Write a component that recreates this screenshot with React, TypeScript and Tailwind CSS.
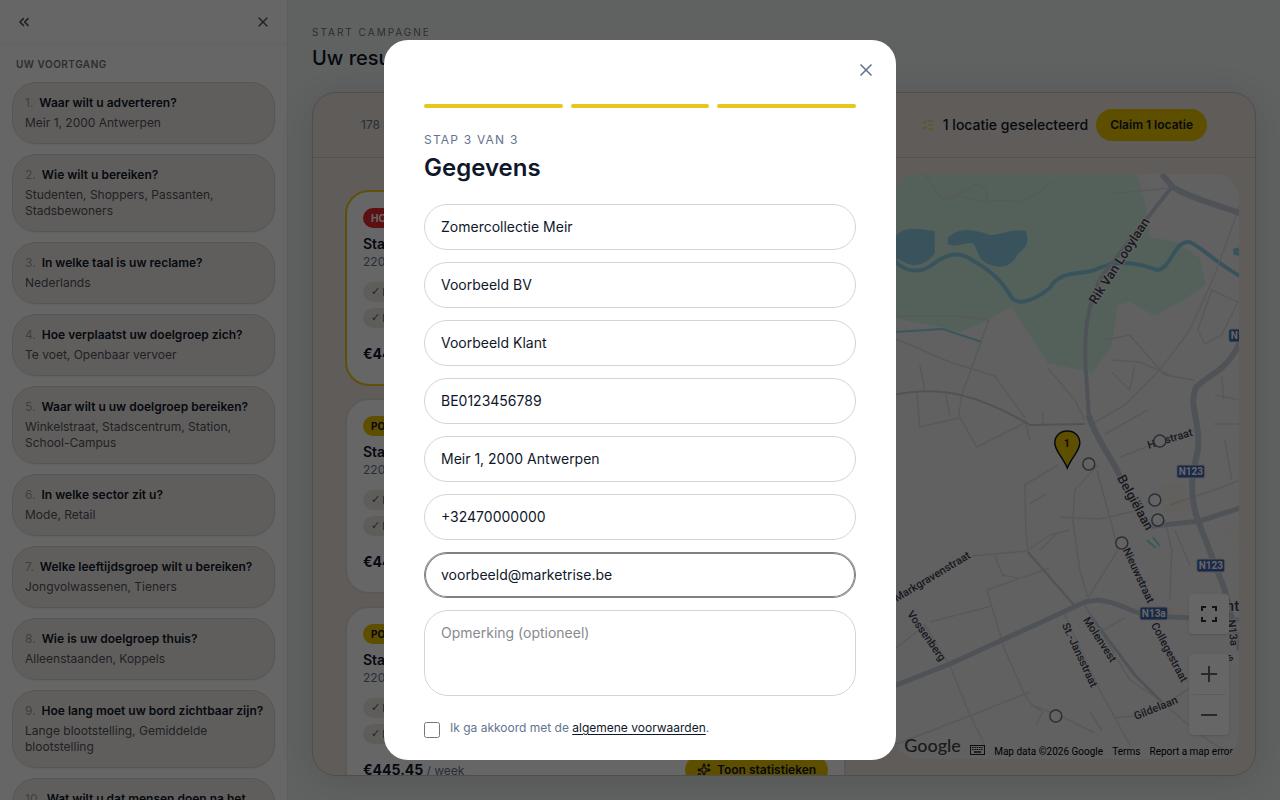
import { ChevronsLeft, ListChecks, Sparkles, X } from 'lucide-react';

const answers = [
  { question: 'Waar wilt u adverteren?', answer: 'Meir 1, 2000 Antwerpen' },
  { question: 'Wie wilt u bereiken?', answer: 'Studenten, Shoppers, Passanten, Stadsbewoners' },
  { question: 'In welke taal is uw reclame?', answer: 'Nederlands' },
  { question: 'Hoe verplaatst uw doelgroep zich?', answer: 'Te voet, Openbaar vervoer' },
  { question: 'Waar wilt u uw doelgroep bereiken?', answer: 'Winkelstraat, Stadscentrum, Station, School-Campus' },
  { question: 'In welke sector zit u?', answer: 'Mode, Retail' },
  { question: 'Welke leeftijdsgroep wilt u bereiken?', answer: 'Jongvolwassenen, Tieners' },
  { question: 'Wie is uw doelgroep thuis?', answer: 'Alleenstaanden, Koppels' },
  { question: 'Hoe lang moet uw bord zichtbaar zijn?', answer: 'Lange blootstelling, Gemiddelde blootstelling' },
  { question: 'Wat wilt u dat mensen doen na het zien?', answer: 'Winkel bezoeken' },
];

const locations = [
  { id: 1, badge: 'HOT', hot: true, selected: true },
  { id: 2, badge: 'POPULAIR', hot: false, selected: false },
  { id: 3, badge: 'POPULAIR', hot: false, selected: false },
];

const fields = [
  { name: 'campaign', label: 'Campagnenaam', type: 'text', value: 'Zomercollectie Meir' },
  { name: 'company', label: 'Bedrijfsnaam', type: 'text', value: 'Voorbeeld BV' },
  { name: 'contact', label: 'Contactpersoon', type: 'text', value: 'Voorbeeld Klant' },
  { name: 'vat', label: 'BTW-nummer', type: 'text', value: 'BE0123456789' },
  { name: 'address', label: 'Adres', type: 'text', value: 'Meir 1, 2000 Antwerpen' },
  { name: 'phone', label: 'Telefoon', type: 'tel', value: '+32470000000' },
  { name: 'email', label: 'E-mail', type: 'email', value: 'voorbeeld@marketrise.be' },
];

const minorRoads = [
  'M925 174 L935 190 L942 200 L960 196 L985 202 L1000 200 L1020 202 L1040 192 L1055 180',
  'M950 198 L978 184 L987 190 L987 200',
  'M1110 194 L1150 190 L1168 188',
  'M1240 205 L1215 275 L1190 330 L1160 370 L1125 405 L1092 424',
  'M894 338 L950 362 L995 376 L1025 418',
  'M894 316 L960 316 L989 320 L962 395 L959 415 L977 447 L1025 423',
  'M917 392 L920 427 L959 418',
  'M1048 368 L1075 400 L1085 420',
  'M1105 340 L1130 335 L1165 375 L1195 380',
  'M1105 434 L1148 410',
  'M1112 360 L1140 362 L1170 375',
  'M1112 372 L1130 390 L1135 365',
  'M1212 290 L1238 302 L1222 335 L1205 344 L1198 330 Z',
  'M1120 457 L1165 440 L1195 430',
  'M1025 420 L1030 440',
  'M1058 465 L1025 485 L1026 530 L1028 550',
  'M1098 465 L1075 490 L1073 520 L1080 570 L1088 598',
  'M1097 470 L1112 525 L1118 550 L1088 598',
  'M1060 517 L1100 519 L1140 510',
  'M1028 550 L1050 535 L1070 530',
  'M972 556 L1028 551',
  'M995 556 L1003 575 L1018 578',
  'M987 590 L1050 568 M987 590 L1005 650 L1025 695 L1032 705 L1065 718 L1095 733',
  'M930 622 L992 606',
  'M894 650 L925 625 L950 665 L970 715 L985 745',
  'M894 745 L970 716 L1030 692',
  'M1085 605 L1130 680 L1160 700 L1200 735 L1240 760',
  'M1065 615 L1100 690 L1130 745',
  'M1115 718 L1150 714 L1190 688 L1215 675',
  'M1095 635 L1125 618',
  'M1032 705 L1043 712 L1036 726 M1090 712 L1102 730',
  'M1165 520 L1172 550 L1170 600',
  'M1170 505 L1220 488 L1240 480',
  'M1215 395 L1240 400 M1214 424 L1240 424 M1222 376 L1224 400',
  'M1225 440 L1232 480 M1175 530 L1190 565',
  'M920 365 L925 390 M946 395 L950 415 M1043 412 L1043 425',
  'M1040 550 L1058 533 M1030 504 L1046 494',
];

const mapLabels = [
  { text: 'Rik Van Looylaan', x: 1096, y: 305, angle: -57, size: 13 },
  { text: 'Belgiëlaan', x: 1117, y: 478, angle: 61, size: 13 },
  { text: 'Hofstraat', x: 1149, y: 449, angle: -17, size: 11 },
  { text: 'Nieuwstraat', x: 1123, y: 550, angle: 65, size: 11 },
  { text: 'Markgravenstraat', x: 897, y: 602, angle: -31, size: 11 },
  { text: 'Vossenberg', x: 907, y: 614, angle: 55, size: 11 },
  { text: 'St.-Jansstraat', x: 1062, y: 625, angle: 65, size: 11 },
  { text: 'Molenvest', x: 1083, y: 620, angle: 57, size: 11 },
  { text: 'Collegestraat', x: 1151, y: 625, angle: 62, size: 11 },
  { text: 'Gildelaan', x: 1136, y: 720, angle: -22, size: 11 },
  { text: 'N13a', x: 1228, y: 620, angle: 84, size: 11 },
  { text: 's', x: 1230, y: 662, angle: -40, size: 11 },
];

const roadShields = [
  { text: 'N123', x: 1191, y: 472 },
  { text: 'N123', x: 1211, y: 566 },
  { text: 'N13a', x: 1154, y: 614 },
  { text: 'N123', x: 1243, y: 336 },
];

const places = [
  [1160, 441],
  [1089, 464],
  [1155, 500],
  [1158, 520],
  [1122, 543],
  [1056, 716],
];

function Sidebar() {
  return (
    <aside className="flex w-72 shrink-0 flex-col border-r border-slate-200 bg-white">
      <div className="flex h-11 shrink-0 items-center justify-between border-b border-slate-100 px-4">
        <button aria-label="Inklappen" className="text-zinc-600">
          <ChevronsLeft size={16} strokeWidth={2.5} />
        </button>
        <button aria-label="Sluiten" className="text-zinc-600">
          <X size={16} />
        </button>
      </div>
      <div className="flex-1 overflow-hidden px-3 pt-3">
        <h2 className="mb-2.5 px-1 text-[10px] leading-4 font-semibold tracking-wider text-zinc-500 uppercase">
          Uw voortgang
        </h2>
        <ol className="space-y-2.5">
          {answers.map((item, i) => (
            <li key={item.question} className="rounded-3xl border border-[#d9d6cf] bg-[#efebe5] py-3 pr-1.5 pl-3 text-xs leading-4 shadow-xs">
              <p className="font-semibold text-slate-900">
                <span className="mr-1.5 font-normal text-zinc-400">{i + 1}.</span>
                {item.question}
              </p>
              <p className="mt-1 pr-1.5 text-zinc-600">{item.answer}</p>
            </li>
          ))}
        </ol>
      </div>
    </aside>
  );
}

function Chip({ text }: { text: string }) {
  return (
    <span className="flex h-5 items-center gap-0.5 rounded-full bg-[#ebe8e0] px-2">
      <span className="font-['DejaVu_Sans',sans-serif]">✓</span>
      {text}
    </span>
  );
}

function LocationCard({ badge, hot, selected }: { badge: string; hot: boolean; selected: boolean }) {
  return (
    <article className={`rounded-3xl border-2 bg-white p-4 ${selected ? 'border-[#eac51d]' : 'border-[#e4dfd6]'}`}>
      <span
        className={`flex h-5 w-fit items-center rounded-full px-2 text-[10px] font-bold ${
          hot ? 'bg-[#e62a2e] text-white' : 'bg-[#eac400] text-slate-900'
        }`}
      >
        {badge}
      </span>
      <h3 className="mt-1.5 text-sm leading-5 font-semibold text-slate-900">Stationsstraat</h3>
      <p className="text-xs leading-4 text-slate-500">2200 Herentals</p>
      <div className="mt-3 flex flex-col items-start gap-1.5 text-[11px] text-slate-600">
        <Chip text="In het centrum" />
        <Chip text="Doelgroep aanwezig" />
      </div>
      <div className="mt-3 flex h-7 items-center justify-between">
        <p className="text-sm font-bold text-slate-900">
          €445.45 <span className="text-xs font-normal text-slate-500">/ week</span>
        </p>
        <button className="flex h-7 items-center gap-1.5 rounded-full bg-[#eac400] px-3 text-xs font-semibold text-slate-900">
          <Sparkles size={14} />
          Toon statistieken
        </button>
      </div>
    </article>
  );
}

function MapDrawing() {
  return (
    <svg viewBox="894 174 345 585" preserveAspectRatio="xMaxYMin slice" className="h-full w-full" fontFamily="Roboto, sans-serif">
      <rect x="894" y="174" width="346" height="586" fill="#f3f2f3" />
      <path
        d="M894 174 H1137 L1146 205 L1150 237 L1178 242 L1200 258 L1206 285 L1180 302 L1155 316 L1130 302 L1118 305 L1112 345 L1093 373 L1048 363 L1025 328 L1011 307 L980 324 L960 332 L930 325 L894 318 Z"
        fill="#d3f3e0"
      />
      <path d="M1160 485 L1185 482 L1190 512 L1165 514 Z M1135 605 L1200 610 L1198 622 L1140 618 Z M1225 530 H1240 V560 Z" fill="#f6f0e6" />
      <g fill="#90d0e8">
        <path d="M894 238 C902 226 915 228 935 231 V253 C928 264 915 268 906 263 C900 260 894 258 894 258 Z" />
        <path d="M948 238 C960 226 975 230 990 235 C1005 234 1012 228 1026 231 C1030 243 1026 248 1018 254 C1012 266 1002 270 988 264 C976 258 978 246 972 243 C962 243 955 248 948 244 Z" />
        <path d="M1233 249 L1240 247 V256 L1234 255 Z" />
      </g>
      <path
        d="M894 260 C905 272 920 274 932 265 C945 255 958 250 972 260 C990 270 1002 280 1012 298 C1020 306 1035 300 1050 288 C1060 270 1080 275 1095 270 C1120 258 1140 264 1158 270 C1172 268 1174 240 1190 242 C1203 248 1215 262 1240 276"
        fill="none"
        stroke="#90d0e8"
        strokeWidth="4"
      />
      <path d="M894 332 L943 329 L982 342 M1147 540 L1156 548 M1153 537 L1160 546" fill="none" stroke="#90dae8" strokeWidth="2" />
      <g fill="none" stroke="#dadde3" strokeWidth="1.5">
        {minorRoads.map((d) => (
          <path key={d} d={d} />
        ))}
      </g>
      <g fill="none" stroke="#c6ced8" strokeLinejoin="round">
        <path d="M894 395 C940 385 980 395 1030 425 L1085 424" strokeWidth="2" />
        <path d="M1172 187 L1138 230 L1102 276 C1086 305 1084 340 1086 370 L1089 415" strokeWidth="4" />
        <path d="M1089 415 C1094 435 1110 455 1118 472 L1145 525" strokeWidth="6" />
        <path d="M1162 174 L1173 187 C1190 198 1215 204 1240 213" strokeWidth="6" />
        <path d="M1240 342 C1228 372 1205 376 1196 388 C1188 405 1202 425 1198 450 C1193 475 1188 490 1198 520 L1225 590 L1240 650" strokeWidth="6" />
        <path d="M1145 527 L1200 521 L1240 508" strokeWidth="5" />
        <path d="M894 686 L950 664 L1068 610 L1085 602 L1098 600 C1120 602 1130 612 1150 616 L1240 620" strokeWidth="5" />
        <path d="M1028 552 L1075 606" strokeWidth="2" />
        <path d="M1090 615 L1135 675 L1165 705" strokeWidth="3" />
      </g>
      <g fill="#3c4250" fontWeight="500" stroke="#f3f2f3" strokeWidth="2" paintOrder="stroke">
        {mapLabels.map((l) => (
          <text key={l.text} x={l.x} y={l.y} fontSize={l.size} transform={`rotate(${l.angle} ${l.x} ${l.y})`}>
            {l.text}
          </text>
        ))}
        <text x="1226" y="611" fontSize="15">
          nt
        </text>
      </g>
      {roadShields.map((s) => (
        <g key={`${s.x}-${s.y}`}>
          <rect x={s.x - 14} y={s.y - 7} width="28" height="13" rx="2" fill="#3f68b4" stroke="#ddd" />
          <text x={s.x} y={s.y + 3} fontSize="10" fontWeight="700" fill="#fff" textAnchor="middle">
            {s.text}
          </text>
        </g>
      ))}
      {places.map(([x, y]) => (
        <circle key={`${x}-${y}`} cx={x} cy={y} r="6" fill="#f8f8f8" stroke="#6b7280" strokeWidth="1.5" />
      ))}
      <path
        d="M1067.500 468 C1063 457 1055 451 1055 443 C1055 435.500 1060.500 431 1067.500 431 C1074.500 431 1080 435.500 1080 443 C1080 451 1072 457 1067.500 468 Z"
        fill="#eac400"
        stroke="#111827"
        strokeWidth="1.5"
      />
      <text x="1067" y="447" fontSize="10" fontWeight="700" fill="#111827" textAnchor="middle">
        1
      </text>
    </svg>
  );
}

function MapPanel() {
  return (
    <div className="relative h-full overflow-hidden rounded-3xl">
      <div className="h-full">
        <MapDrawing />
      </div>
      <button aria-label="Volledig scherm" className="absolute right-2.5 bottom-[125px] flex size-10 items-center justify-center rounded bg-white text-[#333] shadow">
        <svg width="16" height="16" viewBox="0 0 16 16" fill="none" stroke="currentColor" strokeWidth="2">
          <path d="M1 5V1h4M11 1h4v4M15 11v4h-4M5 15H1v-4" />
        </svg>
      </button>
      <div className="absolute right-2.5 bottom-6 flex w-10 flex-col rounded bg-white text-[#666] shadow">
        <button aria-label="Inzoomen" className="flex h-10 items-center justify-center">
          <svg width="16" height="16" viewBox="0 0 16 16" stroke="currentColor" strokeWidth="2">
            <path d="M0 8h16M8 0v16" />
          </svg>
        </button>
        <div className="mx-1 h-px bg-gray-200" />
        <button aria-label="Uitzoomen" className="flex h-10 items-center justify-center">
          <svg width="16" height="16" viewBox="0 0 16 16" stroke="currentColor" strokeWidth="2">
            <path d="M0 8h16" />
          </svg>
        </button>
      </div>
      <div className="absolute right-1.5 bottom-0 left-2.5 flex items-end justify-between font-[Roboto,sans-serif] text-[10px] text-black">
        <span className="font-[Lato,sans-serif] text-lg leading-7 font-medium text-[#444]">Google</span>
        <svg width="15" height="10" viewBox="0 0 15 10" className="mb-1" fill="none" stroke="#222">
          <rect x=".5" y=".5" width="14" height="9" />
          <path d="M2 2.500h11M2 4.500h11" strokeDasharray="1.500 .8" />
          <path d="M4 7h7" strokeWidth="1.5" />
        </svg>
        <span>Map data ©2026 Google</span>
        <a href="#terms">Terms</a>
        <a href="#report">Report a map error</a>
      </div>
    </div>
  );
}

function Results() {
  return (
    <main className="flex min-w-0 flex-1 flex-col bg-[#f0f4f3] p-6">
      <p className="text-[10px] leading-4 tracking-[0.2em] text-zinc-500 uppercase">Start campagne</p>
      <h1 className="mt-1 mb-5 text-xl leading-7 font-medium text-slate-900">Uw resultaten</h1>
      <section className="flex min-h-0 flex-1 flex-col overflow-hidden rounded-3xl border border-[#c4c2bc] bg-[#ede7df] shadow-[0_4px_40px_rgba(15,23,42,0.12)]">
        <div className="flex h-[65px] shrink-0 items-center justify-between border-b border-[#d0ccc4] px-12">
          <p className="text-xs text-slate-500">178 locaties gevonden</p>
          <div className="flex items-center gap-2">
            <ListChecks size={14} className="text-[#eac400] opacity-60" />
            <span className="text-sm font-medium text-slate-900">1 locatie geselecteerd</span>
            <button className="h-8 rounded-full bg-[#eac400] px-3.5 text-xs font-semibold text-slate-900">Claim 1 locatie</button>
          </div>
        </div>
        <div className="flex min-h-0 flex-1">
          <div className="w-3/5 space-y-3 overflow-hidden p-8">
            {locations.map((l) => (
              <LocationCard key={l.id} badge={l.badge} hot={l.hot} selected={l.selected} />
            ))}
          </div>
          <div className="w-2/5 p-4">
            <MapPanel />
          </div>
        </div>
      </section>
    </main>
  );
}

function DetailsModal() {
  return (
    <div className="fixed inset-0 z-10 flex items-center justify-center bg-black/60 p-4">
      <div role="dialog" aria-modal="true" aria-labelledby="modal-title" className="relative max-h-[90vh] w-full max-w-lg overflow-hidden rounded-3xl bg-white px-10 pt-16">
        <button aria-label="Sluiten" className="absolute top-5 right-5 text-slate-500">
          <X size={20} />
        </button>
        <div className="flex gap-2">
          <div className="h-1 flex-1 rounded-full bg-[#eac51d]" />
          <div className="h-1 flex-1 rounded-full bg-[#eac51d]" />
          <div className="h-1 flex-1 rounded-full bg-[#eac51d]" />
        </div>
        <p className="mt-6 text-xs leading-4 tracking-widest text-slate-500 uppercase">Stap 3 van 3</p>
        <h2 id="modal-title" className="mt-1 text-2xl leading-8 font-semibold text-slate-900">
          Gegevens
        </h2>
        <form className="mt-5 pb-24">
          <div className="space-y-3">
            {fields.map((f) => (
              <input
                key={f.name}
                type={f.type}
                name={f.name}
                aria-label={f.label}
                defaultValue={f.value}
                className={`block h-[46px] w-full rounded-full border px-4 pb-0.5 text-sm text-slate-900 outline-none ${
                  f.name === 'email' ? 'border-[#808080] ring-1 ring-[#808080] ring-inset' : 'border-neutral-300'
                }`}
              />
            ))}
            <textarea
              name="remark"
              aria-label="Opmerking"
              placeholder="Opmerking (optioneel)"
              className="block h-[86px] w-full resize-none rounded-3xl border border-neutral-300 px-4 py-3 text-sm leading-5 placeholder:text-[#878a90]"
            />
          </div>
          <div className="mt-6 flex items-start gap-2.5">
            <input id="terms" type="checkbox" className="mt-0.5 size-4 shrink-0" />
            <label htmlFor="terms" className="text-xs leading-4 text-slate-500">
              Ik ga akkoord met de{' '}
              <a href="#voorwaarden" className="text-slate-900 underline underline-offset-2">
                algemene voorwaarden
              </a>
              .
            </label>
          </div>
        </form>
      </div>
    </div>
  );
}

export default function App() {
  return (
    <div className="flex h-screen overflow-hidden font-[Inter,sans-serif]">
      <Sidebar />
      <Results />
      <DetailsModal />
    </div>
  );
}
